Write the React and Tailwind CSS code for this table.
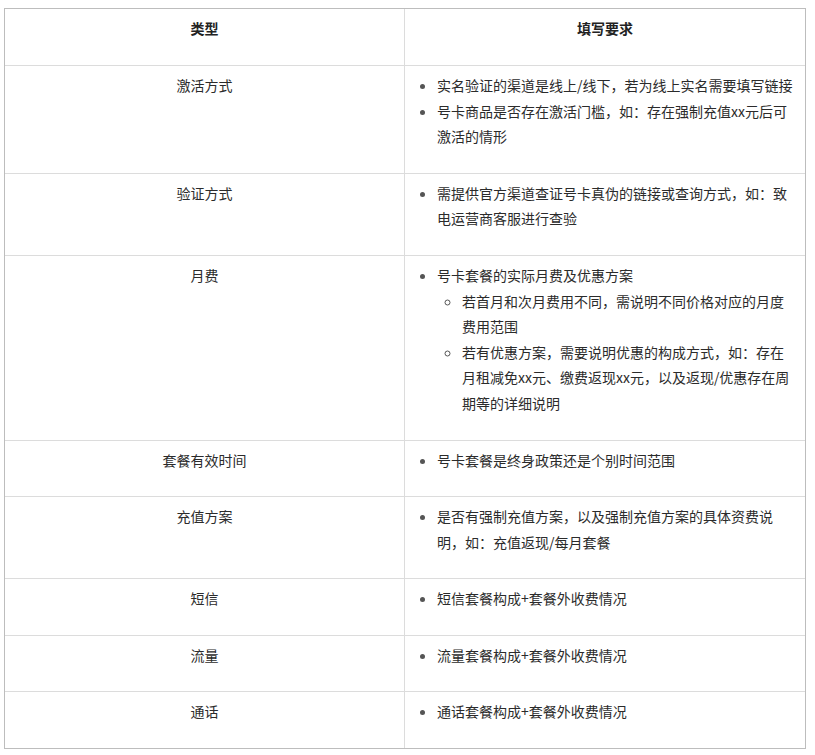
import React from "react";

const rows = [
  {
    type: "激活方式",
    items: [
      { text: "实名验证的渠道是线上/线下，若为线上实名需要填写链接" },
      { text: "号卡商品是否存在激活门槛，如：存在强制充值xx元后可激活的情形" },
    ],
  },
  {
    type: "验证方式",
    items: [{ text: "需提供官方渠道查证号卡真伪的链接或查询方式，如：致电运营商客服进行查验" }],
  },
  {
    type: "月费",
    items: [
      {
        text: "号卡套餐的实际月费及优惠方案",
        sub: [
          "若首月和次月费用不同，需说明不同价格对应的月度费用范围",
          "若有优惠方案，需要说明优惠的构成方式，如：存在月租减免xx元、缴费返现xx元，以及返现/优惠存在周期等的详细说明",
        ],
      },
    ],
  },
  { type: "套餐有效时间", items: [{ text: "号卡套餐是终身政策还是个别时间范围" }] },
  {
    type: "充值方案",
    items: [{ text: "是否有强制充值方案，以及强制充值方案的具体资费说明，如：充值返现/每月套餐" }],
  },
  { type: "短信", items: [{ text: "短信套餐构成+套餐外收费情况" }] },
  { type: "流量", items: [{ text: "流量套餐构成+套餐外收费情况" }] },
  { type: "通话", items: [{ text: "通话套餐构成+套餐外收费情况" }] },
];

export default function App() {
  return (
    <div
      className="min-h-[755px] w-[815px] bg-white pt-[8px] pl-[4px] text-[14px] leading-[25.6px] text-[#2b2b2b]"
      style={{ fontFamily: '"Noto Sans CJK SC", "Noto Sans", sans-serif' }}
    >
      <div className="w-[802px] border border-[#bdbdbd]">
        <div className="flex">
          <div className="w-[400px] shrink-0 border-r border-[#dcdcdc] pt-[7px] pb-[23.4px] text-center font-bold text-[#222]">
            类型
          </div>
          <div className="flex-1 pt-[7px] pb-[23.4px] text-center font-bold text-[#222]">填写要求</div>
        </div>
        {rows.map((r) => (
          <div key={r.type} className="flex border-t border-[#dcdcdc]">
            <div className="w-[400px] shrink-0 border-r border-[#dcdcdc] pt-[7px] pb-[23px] text-center">
              {r.type}
            </div>
            <div className="flex-1 pt-[7px] pr-2 pb-[23px] pl-2">
              <ul className="list-disc pl-6 marker:text-[#555]">
                {r.items.map((it) => (
                  <li key={it.text}>
                    {it.text}
                    {it.sub && (
                      <ul className="list-[circle] pl-[25px] marker:text-[#555]">
                        {it.sub.map((s) => (
                          <li key={s}>{s}</li>
                        ))}
                      </ul>
                    )}
                  </li>
                ))}
              </ul>
            </div>
          </div>
        ))}
      </div>
    </div>
  );
}
